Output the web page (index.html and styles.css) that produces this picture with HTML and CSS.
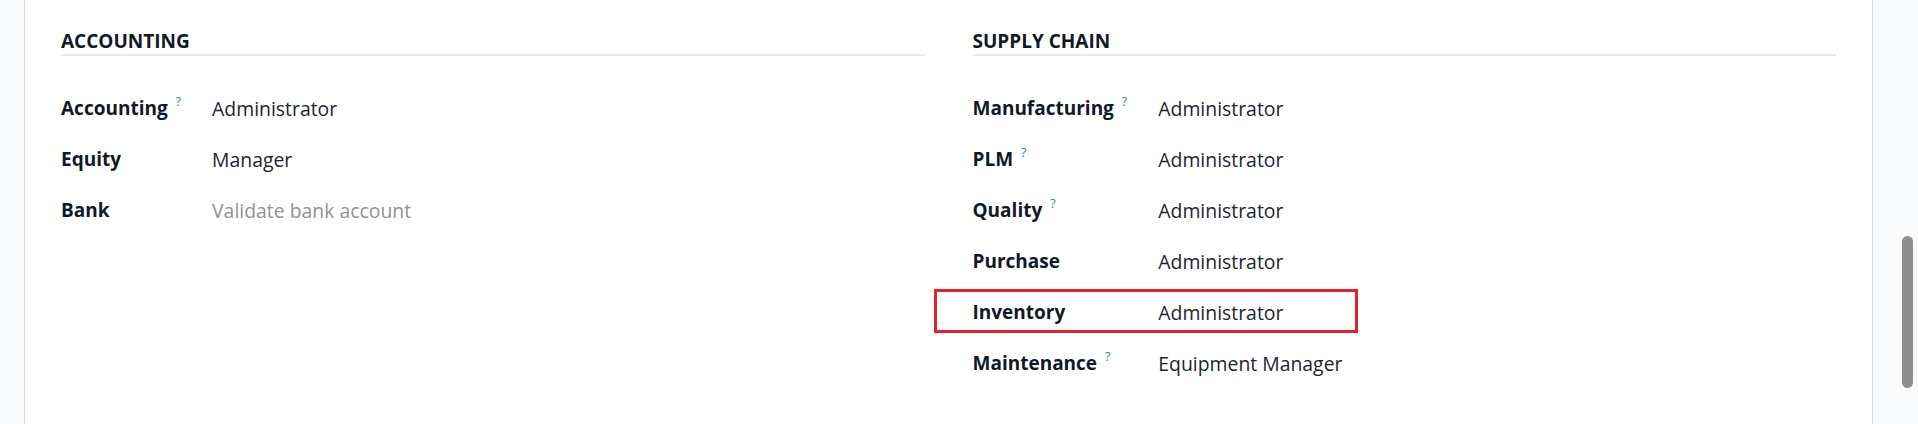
FILE: index.html
```html
<!DOCTYPE html>
<html lang="en">
<head>
<meta charset="utf-8">
<title>Settings - Users</title>
<link rel="stylesheet" href="styles.css">
</head>
<body>
<div class="page">
  <div class="gutter"></div>
  <main class="sheet">
    <div class="columns">
      <section class="group">
        <h2 class="group-title">Accounting</h2>
        <div class="fields">
          <div class="label">Accounting<sup class="help">?</sup></div>
          <div class="value">Administrator</div>
          <div class="label">Equity</div>
          <div class="value">Manager</div>
          <div class="label">Bank</div>
          <div class="value placeholder">Validate bank account</div>
        </div>
      </section>
      <section class="group">
        <h2 class="group-title">Supply Chain</h2>
        <div class="fields">
          <div class="label">Manufacturing<sup class="help">?</sup></div>
          <div class="value">Administrator</div>
          <div class="label">PLM<sup class="help">?</sup></div>
          <div class="value">Administrator</div>
          <div class="label">Quality<sup class="help">?</sup></div>
          <div class="value">Administrator</div>
          <div class="label">Purchase</div>
          <div class="value">Administrator</div>
          <div class="label highlighted">Inventory<span class="highlight-box"></span></div>
          <div class="value">Administrator</div>
          <div class="label">Maintenance<sup class="help">?</sup></div>
          <div class="value">Equipment Manager</div>
        </div>
      </section>
    </div>
  </main>
  <aside class="scroll-area">
    <div class="track"><div class="thumb"></div></div>
  </aside>
</div>
</body>
</html>
```
FILE: styles.css
```css
html, body {
  margin: 0;
  padding: 0;
}
body {
  background: #f9fafb;
  font-family: "Open Sans", "Noto Sans", sans-serif;
  color: #1b1b2a;
  width: 1918px;
  height: 424px;
  overflow: hidden;
}
.page {
  display: flex;
  height: 424px;
}
.gutter {
  width: 24px;
  flex: none;
  background: #f9fafb;
}
.sheet {
  flex: none;
  background: #ffffff;
  border-left: 1px solid #d8dadd;
  border-right: 1px solid #d8dadd;
  padding: 28px 36px 0;
  box-sizing: content-box;
  width: 1775px;
}
.columns {
  display: grid;
  grid-template-columns: 1fr 1fr;
  column-gap: 48px;
}
.group-title {
  margin: 0;
  font-size: 19px;
  line-height: 26px;
  font-weight: 700;
  text-transform: uppercase;
  color: #111827;
  padding-bottom: 0;
  border-bottom: 2px solid #e9e9e9;
}
.fields {
  margin-top: 27px;
  display: grid;
  grid-template-columns: max-content 1fr;
  column-gap: 26px;
  grid-auto-rows: 51px;
  align-items: center;
}
.label {
  font-weight: 700;
  font-size: 19px;
  line-height: 27px;
  color: #111827;
  white-space: nowrap;
}
.value {
  font-size: 19.4px;
  line-height: 27px;
  color: #1f2433;
  white-space: nowrap;
}
.value.placeholder {
  color: #8f9297;
}
.help {
  font-size: 12.5px;
  font-weight: 400;
  color: #2a86c9;
  margin-left: 8px;
  padding-right: 5px;
  vertical-align: 9px;
  line-height: 0;
}
.highlighted {
  position: relative;
}
.highlight-box {
  position: absolute;
  left: -39px;
  top: -10px;
  width: 418px;
  height: 38px;
  border: 3px solid #e8202a;
}
.scroll-area {
  flex: 1;
  display: flex;
  justify-content: flex-end;
  background: #f9fafb;
}
.track {
  width: 21px;
  background: #f8f9fa;
  display: flex;
  justify-content: center;
}
.thumb {
  margin-top: 236px;
  width: 11px;
  height: 152px;
  border-radius: 6px;
  background: #8e8e8e;
}
```
